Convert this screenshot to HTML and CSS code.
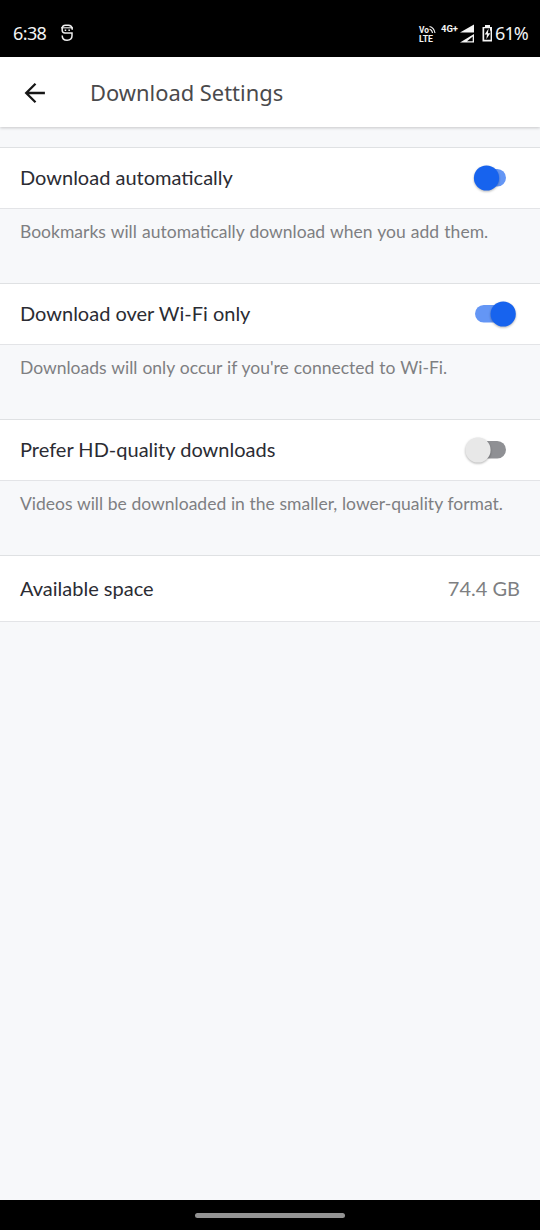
FILE: index.html
```html
<!DOCTYPE html>
<html lang="en">
<head>
<meta charset="utf-8">
<title>Download Settings</title>
<link rel="stylesheet" href="styles.css">
</head>
<body>
<div class="screen">
  <div class="status-bar">
    <span class="clock">6:38</span>
    <svg class="status-app" width="14" height="18" viewBox="0 0 14 18" fill="none" stroke="#eee" stroke-width="1.5">
      <path d="M12.2 5.8V4.6Q11.6 1.3 8.5 1.3H5.5Q2.2 1.3 2.2 4.6V6.2Q2.2 8.9 5 8.9H12V11.8Q12 16.2 7.1 16.2Q2.2 16.2 2.2 11.4"/>
      <path d="M1 3.8H13" stroke-width="1.1"/>
      <path d="M4.7 6.3H6.2M8.4 6.3H9.9" stroke-width="1.5"/>
    </svg>
    <svg class="status-icons" width="76" height="22" viewBox="0 0 76 22" fill="#f4f4f4">
      <g class="status-small">
        <text x="1" y="10" textLength="10" lengthAdjust="spacingAndGlyphs">Vo</text>
        <text x="1" y="18.5" textLength="14" lengthAdjust="spacingAndGlyphs">LTE</text>
        <text x="23" y="9" textLength="17" lengthAdjust="spacingAndGlyphs">4G+</text>
      </g>
      <path d="M11.5 3.5Q16 4.3 17 10M11.5 6.2Q14 6.7 14.5 10" fill="none" stroke="#f4f4f4" stroke-width="1.1"/>
      <path d="M42 9.5L56 1.5V9.5Z"/>
      <path d="M42 19.5L56 11V19.5Z"/>
      <path d="M49 18.2L54.7 13.4V18.2Z" fill="#000"/>
      <path d="M67 2H72V4H74V18.5H64.5V4H67Z"/>
      <path d="M66.7 5.2H72V7L72.6 8.5V16.7H66.2V5.2Z" fill="#000"/>
      <path d="M70.6 5.5L66.7 11.6H69L68.3 16.3L72.3 10.2H69.9Z"/>
    </svg>
    <span class="battery">61%</span>
  </div>

  <header class="app-bar">
    <svg class="back" width="22" height="22" viewBox="0 0 22 22" fill="none" stroke="#161616" stroke-width="2.3">
      <path d="M20.9 11H2.5M11.5 1.7L2.2 11L11.5 20.3"/>
    </svg>
    <h1 class="title">Download Settings</h1>
  </header>

  <main class="content">
    <div class="row">
      <span class="label">Download automatically</span>
      <svg class="toggle" width="60" height="40" viewBox="0 0 60 40">
        <rect x="15" y="11" width="31" height="17.5" rx="8.75" fill="#6496f5"/>
        <circle class="knob" cx="26.5" cy="20" r="12.6" fill="#1763ee"/>
      </svg>
    </div>
    <p class="note note-auto">Bookmarks will automatically download when you add them.</p>

    <div class="row">
      <span class="label">Download over Wi-Fi only</span>
      <svg class="toggle" width="60" height="40" viewBox="0 0 60 40">
        <rect x="15" y="11" width="31" height="17.5" rx="8.75" fill="#6496f5"/>
        <circle class="knob" cx="43.2" cy="20" r="12.6" fill="#1763ee"/>
      </svg>
    </div>
    <p class="note note-wifi">Downloads will only occur if you're connected to Wi-Fi.</p>

    <div class="row">
      <span class="label">Prefer HD-quality downloads</span>
      <svg class="toggle" width="60" height="40" viewBox="0 0 60 40">
        <rect x="15" y="11" width="31" height="17.5" rx="8.75" fill="#8f9094"/>
        <circle class="knob" cx="18" cy="20" r="12.6" fill="#e8e8e8"/>
      </svg>
    </div>
    <p class="note note-hd">Videos will be downloaded in the smaller, lower-quality format.</p>

    <div class="row row-space">
      <span class="label">Available space</span>
      <span class="value">74.4 GB</span>
    </div>
  </main>

  <div class="nav-bar"><div class="handle"></div></div>
</div>
</body>
</html>
```
FILE: styles.css
```css
* { box-sizing: border-box; }
body { margin: 0; }
.screen {
  width: 540px;
  height: 1230px;
  display: flex;
  flex-direction: column;
  background: #f7f8fa;
  font-family: Lato, sans-serif;
  overflow: hidden;
}
.status-bar {
  height: 57px;
  flex: none;
  display: flex;
  align-items: center;
  padding: 10px 13px 0;
  background: #000;
  color: #f4f4f4;
  font-family: "Noto Sans", sans-serif;
  font-size: 18px;
}
.clock { width: 47px; padding-bottom: 1px; letter-spacing: -0.6px; }
.status-app { margin-top: -2px; }
.status-icons { margin-left: auto; }
.status-small { font: bold 9px Roboto, sans-serif; }
.battery {
  width: 32px;
  margin-left: 1px;
  padding-bottom: 1px;
  letter-spacing: -0.9px;
  white-space: nowrap;
}
.app-bar {
  height: 70px;
  flex: none;
  display: flex;
  align-items: center;
  padding: 1px 0 0 24px;
  background: #fff;
  box-shadow: 0 1px 3px rgba(0, 0, 0, 0.2);
}
.title {
  margin: 0 0 1px 44px;
  color: #4a4a4c;
  font: 400 21.9px "Noto Sans", sans-serif;
}
.content { flex: 1; padding-top: 20px; }
.row {
  height: 62px;
  display: flex;
  align-items: center;
  justify-content: space-between;
  padding: 0 20px;
  background: #fff;
  border-top: 1px solid #dfe1e3;
  border-bottom: 1px solid #e3e4e7;
  font-size: 20px;
}
.label, .value { padding-bottom: 2px; white-space: nowrap; }
.label { color: #2b2c33; }
.toggle { flex: none; overflow: visible; }
.knob { filter: drop-shadow(0 1px 1px rgba(0, 0, 0, 0.3)); }
.note {
  height: 74px;
  margin: 0;
  padding: 11px 20px 0;
  color: #7e7f82;
  font-size: 17.5px;
  line-height: 24px;
  white-space: nowrap;
}
.note-auto { word-spacing: 0.7px; }
.note-wifi { word-spacing: 0.5px; }
.note-hd { word-spacing: 0.2px; }
.row-space { height: 67px; }
.value { color: #7e7f82; }
.nav-bar {
  height: 30px;
  flex: none;
  display: flex;
  align-items: center;
  justify-content: center;
  background: #000;
}
.handle { width: 150px; height: 5px; border-radius: 3px; background: #929292; }
```
